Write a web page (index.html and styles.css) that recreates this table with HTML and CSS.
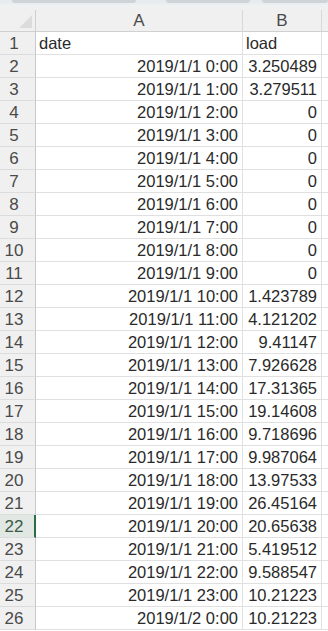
FILE: index.html
```html
<!DOCTYPE html>
<html>
<head>
<meta charset="utf-8">
<link rel="stylesheet" href="styles.css">
</head>
<body>
<div class="topbar">
  <span class="tab t1"></span><span class="tab t2"></span><span class="tab t3"></span>
</div>
<div class="sheet">
  <div class="corner"><span class="tri"></span></div>
  <div class="colhead">A</div>
  <div class="colhead">B</div>
  <div class="colhead last"></div>

  <div class="rowhead">1</div><div class="cell text">date</div><div class="cell text">load</div><div class="cell last"></div>
  <div class="rowhead">2</div><div class="cell">2019/1/1 0:00</div><div class="cell">3.250489</div><div class="cell last"></div>
  <div class="rowhead">3</div><div class="cell">2019/1/1 1:00</div><div class="cell">3.279511</div><div class="cell last"></div>
  <div class="rowhead">4</div><div class="cell">2019/1/1 2:00</div><div class="cell">0</div><div class="cell last"></div>
  <div class="rowhead">5</div><div class="cell">2019/1/1 3:00</div><div class="cell">0</div><div class="cell last"></div>
  <div class="rowhead">6</div><div class="cell">2019/1/1 4:00</div><div class="cell">0</div><div class="cell last"></div>
  <div class="rowhead">7</div><div class="cell">2019/1/1 5:00</div><div class="cell">0</div><div class="cell last"></div>
  <div class="rowhead">8</div><div class="cell">2019/1/1 6:00</div><div class="cell">0</div><div class="cell last"></div>
  <div class="rowhead">9</div><div class="cell">2019/1/1 7:00</div><div class="cell">0</div><div class="cell last"></div>
  <div class="rowhead">10</div><div class="cell">2019/1/1 8:00</div><div class="cell">0</div><div class="cell last"></div>
  <div class="rowhead">11</div><div class="cell">2019/1/1 9:00</div><div class="cell">0</div><div class="cell last"></div>
  <div class="rowhead">12</div><div class="cell">2019/1/1 10:00</div><div class="cell">1.423789</div><div class="cell last"></div>
  <div class="rowhead">13</div><div class="cell">2019/1/1 11:00</div><div class="cell">4.121202</div><div class="cell last"></div>
  <div class="rowhead">14</div><div class="cell">2019/1/1 12:00</div><div class="cell">9.41147</div><div class="cell last"></div>
  <div class="rowhead">15</div><div class="cell">2019/1/1 13:00</div><div class="cell">7.926628</div><div class="cell last"></div>
  <div class="rowhead">16</div><div class="cell">2019/1/1 14:00</div><div class="cell">17.31365</div><div class="cell last"></div>
  <div class="rowhead">17</div><div class="cell">2019/1/1 15:00</div><div class="cell">19.14608</div><div class="cell last"></div>
  <div class="rowhead">18</div><div class="cell">2019/1/1 16:00</div><div class="cell">9.718696</div><div class="cell last"></div>
  <div class="rowhead">19</div><div class="cell">2019/1/1 17:00</div><div class="cell">9.987064</div><div class="cell last"></div>
  <div class="rowhead">20</div><div class="cell">2019/1/1 18:00</div><div class="cell">13.97533</div><div class="cell last"></div>
  <div class="rowhead">21</div><div class="cell">2019/1/1 19:00</div><div class="cell">26.45164</div><div class="cell last"></div>
  <div class="rowhead selected">22</div><div class="cell">2019/1/1 20:00</div><div class="cell">20.65638</div><div class="cell last"></div>
  <div class="rowhead">23</div><div class="cell">2019/1/1 21:00</div><div class="cell">5.419512</div><div class="cell last"></div>
  <div class="rowhead">24</div><div class="cell">2019/1/1 22:00</div><div class="cell">9.588547</div><div class="cell last"></div>
  <div class="rowhead">25</div><div class="cell">2019/1/1 23:00</div><div class="cell">10.21223</div><div class="cell last"></div>
  <div class="rowhead">26</div><div class="cell">2019/1/2 0:00</div><div class="cell">10.21223</div><div class="cell last"></div>
</div>
</body>
</html>
```
FILE: styles.css
```css
html, body {
  margin: 0;
  padding: 0;
  background: #ffffff;
  overflow: hidden;
}
body {
  width: 328px;
  height: 631px;
  font-family: "Liberation Sans", Arial, sans-serif;
  color: #222222;
}
.topbar {
  height: 10px;
  background: linear-gradient(#e6ecee 0, #e9eef0 4px, #eff1f2 5px, #f0f0f0 10px);
  display: flex;
  align-items: flex-start;
}
.tab {
  height: 3px;
  background: #cdd5d9;
  border-radius: 0 0 4px 4px;
}
.t1 { margin-left: 12px; width: 124px; }
.t2 { margin-left: 30px; width: 84px; }
.t3 { margin-left: 12px; flex: 1; }

.sheet {
  display: grid;
  grid-template-columns: 36px 207px 79px 1fr;
  grid-template-rows: 22px;
  grid-auto-rows: 23px;
}
.corner {
  background: #f0f0f0;
  border-right: 1px solid #d0d0d0;
  border-bottom: 1px solid #d0d0d0;
  position: relative;
}
.tri {
  position: absolute;
  right: 3px;
  bottom: 3px;
  width: 0;
  height: 0;
  border-left: 13px solid transparent;
  border-bottom: 13px solid #dcdcdc;
}
.colhead {
  background: #f0f0f0;
  border-right: 1px solid #d8d8d8;
  border-bottom: 1px solid #d0d0d0;
  font-size: 17px;
  line-height: 22px;
  text-align: center;
  color: #4a4a4a;
}
.colhead.last { border-right: none; }
.rowhead {
  background: #f0f0f0;
  border-right: 1px solid #c8c8c8;
  border-bottom: 1px solid #dcdcdc;
  font-size: 17px;
  line-height: 23px;
  text-align: center;
  color: #4a4a4a;
  padding-right: 7px;
}
.rowhead.selected {
  background: #e1e7e3;
  border-right: 2px solid #2a6e45;
  color: #3b5a48;
  padding-right: 6px;
}
.cell {
  border-right: 1px solid #e0e0e0;
  border-bottom: 1px solid #e0e0e0;
  font-size: 16.5px;
  line-height: 23px;
  text-align: right;
  padding-right: 4px;
  white-space: nowrap;
  overflow: hidden;
  color: #2a2a2a;
}
.cell.text {
  text-align: left;
  padding-left: 3px;
  padding-right: 0;
}
.cell.last {
  border-right: none;
  padding: 0;
}
```
